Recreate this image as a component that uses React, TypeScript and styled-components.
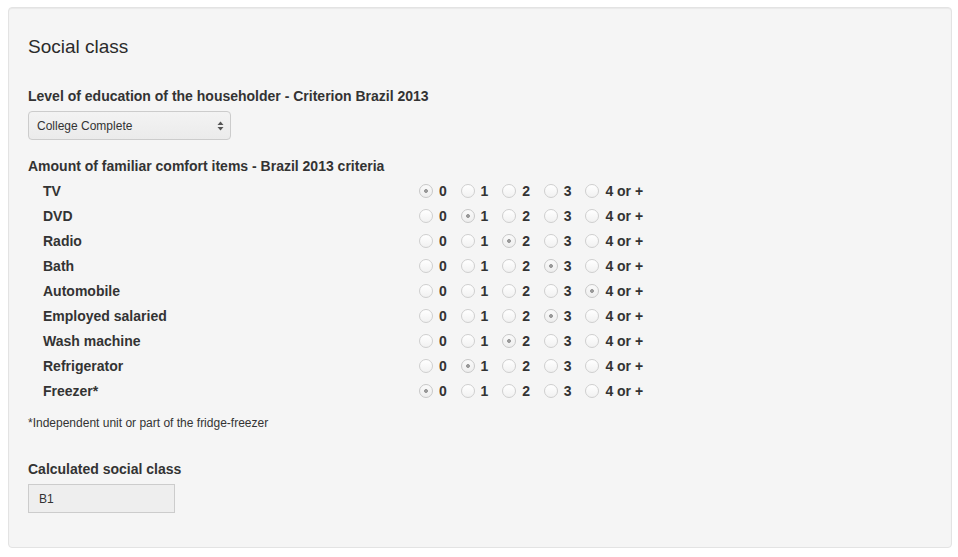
import React, { useState } from "react";
import styled, { createGlobalStyle } from "styled-components";

const ITEMS = [
  { name: "TV", value: 0 },
  { name: "DVD", value: 1 },
  { name: "Radio", value: 2 },
  { name: "Bath", value: 3 },
  { name: "Automobile", value: 4 },
  { name: "Employed salaried", value: 3 },
  { name: "Wash machine", value: 2 },
  { name: "Refrigerator", value: 1 },
  { name: "Freezer*", value: 0 },
];

const OPTIONS = ["0", "1", "2", "3", "4 or +"];

const GlobalStyle = createGlobalStyle`
  * {
    box-sizing: border-box;
  }
  body {
    margin: 0;
    background: #ffffff;
    font-family: "Liberation Sans", Arial, Helvetica, sans-serif;
    font-size: 14px;
    line-height: 20px;
    color: #333333;
  }
`;

export default function App() {
  const [values, setValues] = useState(ITEMS.map((item) => item.value));

  function handleChange(row: number, value: number) {
    setValues((prev) => prev.map((v, i) => (i === row ? value : v)));
  }

  const rowsMarkup = ITEMS.map((item, row) => (
    <ItemRow key={item.name}>
      <ItemName>{item.name}</ItemName>
      <RadioGroup>
        {OPTIONS.map((option, idx) => (
          <RadioLabel key={option}>
            <Radio
              type="radio"
              name={`item-${row}`}
              checked={values[row] === idx}
              onChange={() => handleChange(row, idx)}
            />
            {option}
          </RadioLabel>
        ))}
      </RadioGroup>
    </ItemRow>
  ));

  return (
    <>
      <GlobalStyle />
      <Page>
        <Well>
          <Title>Social class</Title>

          <FieldLabel>Level of education of the householder - Criterion Brazil 2013</FieldLabel>
          <SelectBox>
            <span>College Complete</span>
            <svg width="7" height="10" viewBox="0 0 7 10">
              <path d="M3.5 0.5 L6.5 4 L0.5 4 Z" fill="#555" />
              <path d="M3.5 9.5 L6.5 6 L0.5 6 Z" fill="#555" />
            </svg>
          </SelectBox>

          <FieldLabel $top={16} $bottom={2}>
            Amount of familiar comfort items - Brazil 2013 criteria
          </FieldLabel>
          <ItemList>{rowsMarkup}</ItemList>

          <Footnote>*Independent unit or part of the fridge-freezer</Footnote>

          <FieldLabel $top={27}>Calculated social class</FieldLabel>
          <ResultBox>B1</ResultBox>
        </Well>
      </Page>
    </>
  );
}

const Page = styled.div`
  padding: 7px 6px 9px 8px;
`;

const Well = styled.div`
  display: flex;
  flex-direction: column;
  align-items: flex-start;
  min-height: 541px;
  padding: 28px 19px 34px 19px;
  background: #f5f5f5;
  border: 1px solid #e3e3e3;
  border-radius: 4px;
  box-shadow: inset 0 1px 1px rgba(0, 0, 0, 0.05);
`;

const Title = styled.h4`
  margin: 0;
  font-size: 19px;
  font-weight: normal;
  line-height: 22px;
  color: #2b2b2b;
`;

const FieldLabel = styled.label<{ $top?: number; $bottom?: number }>`
  display: block;
  margin-top: ${(p) => p.$top ?? 28}px;
  margin-bottom: ${(p) => p.$bottom ?? 5}px;
  font-weight: bold;
  font-size: 14px;
  line-height: 20px;
`;

const SelectBox = styled.div`
  display: flex;
  align-items: center;
  justify-content: space-between;
  width: 203px;
  height: 29px;
  padding: 0 6px 0 8px;
  font-size: 12px;
  color: #333;
  background: linear-gradient(#f3f3f3, #ebebeb);
  border: 1px solid #cccccc;
  border-radius: 4px;
`;

const ItemList = styled.div`
  display: flex;
  flex-direction: column;
  width: 100%;
`;

const ItemRow = styled.div`
  display: grid;
  grid-template-columns: 376px auto;
  align-items: center;
  height: 25px;
  padding-left: 15px;
`;

const ItemName = styled.span`
  font-weight: bold;
`;

const RadioGroup = styled.div`
  display: flex;
  align-items: center;
  gap: 13.8px;
`;

const RadioLabel = styled.label`
  display: flex;
  align-items: center;
  gap: 6px;
  font-weight: bold;
  cursor: pointer;
`;

const Radio = styled.input`
  appearance: none;
  -webkit-appearance: none;
  width: 14px;
  height: 14px;
  margin: 0;
  border-radius: 50%;
  border: 1px solid #cfcfcf;
  background: linear-gradient(#ffffff, #f1f1f1);
  cursor: pointer;

  &:checked {
    background: radial-gradient(circle, #9a9a9a 0 1.6px, transparent 2.2px),
      linear-gradient(#fafafa, #eeeeee);
    border-color: #c8c8c8;
  }
`;

const Footnote = styled.p`
  margin: 12px 0 0 0;
  font-size: 12px;
  line-height: 17px;
`;

const ResultBox = styled.div`
  display: flex;
  align-items: center;
  width: 147px;
  height: 29px;
  padding: 0 10px;
  font-size: 12px;
  color: #333;
  background: #eeeeee;
  border: 1px solid #cccccc;
`;
